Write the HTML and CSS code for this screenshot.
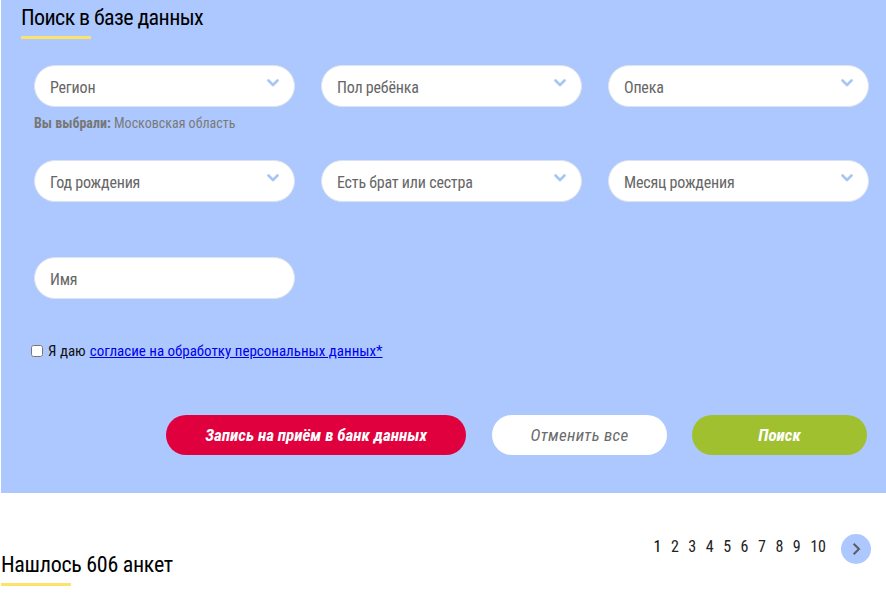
FILE: index.html
```html
<!DOCTYPE html>
<html lang="ru">
<head>
<meta charset="utf-8">
<title>Поиск в базе данных</title>
<link rel="stylesheet" href="styles.css">
</head>
<body>
<div class="page">
  <section class="search">
    <h2 class="heading">Поиск в базе данных</h2>
    <div class="fields">
      <div class="field">
        <div class="select"><span>Регион</span><svg class="chev" viewBox="0 0 12 8"><path d="M1.5 1.5 L6 6 L10.5 1.5"/></svg></div>
        <div class="chosen"><b>Вы выбрали:</b> Московская область</div>
      </div>
      <div class="field">
        <div class="select"><span>Пол ребёнка</span><svg class="chev" viewBox="0 0 12 8"><path d="M1.5 1.5 L6 6 L10.5 1.5"/></svg></div>
      </div>
      <div class="field">
        <div class="select"><span>Опека</span><svg class="chev" viewBox="0 0 12 8"><path d="M1.5 1.5 L6 6 L10.5 1.5"/></svg></div>
      </div>
      <div class="field">
        <div class="select"><span>Год рождения</span><svg class="chev" viewBox="0 0 12 8"><path d="M1.5 1.5 L6 6 L10.5 1.5"/></svg></div>
      </div>
      <div class="field">
        <div class="select"><span>Есть брат или сестра</span><svg class="chev" viewBox="0 0 12 8"><path d="M1.5 1.5 L6 6 L10.5 1.5"/></svg></div>
      </div>
      <div class="field">
        <div class="select"><span>Месяц рождения</span><svg class="chev" viewBox="0 0 12 8"><path d="M1.5 1.5 L6 6 L10.5 1.5"/></svg></div>
      </div>
      <div class="field name-field">
        <div class="select"><span>Имя</span></div>
      </div>
    </div>
    <label class="consent"><input type="checkbox"> Я даю <a href="#">согласие на обработку персональных данных*</a></label>
    <div class="actions">
      <button class="btn btn-red">Запись на приём в банк данных</button>
      <button class="btn btn-white">Отменить все</button>
      <button class="btn btn-green">Поиск</button>
    </div>
  </section>
  <div class="results">
    <h2 class="heading">Нашлось 606 анкет</h2>
    <nav class="pager">
      <a class="current">1</a><a>2</a><a>3</a><a>4</a><a>5</a><a>6</a><a>7</a><a>8</a><a>9</a><a>10</a>
      <span class="next"><svg viewBox="0 0 12 12"><path d="M4 1.5 L8.5 6 L4 10.5"/></svg></span>
    </nav>
  </div>
</div>
</body>
</html>
```
FILE: styles.css
```css
body {
  margin: 0;
  font-family: "Roboto Condensed", Roboto, "Liberation Sans", sans-serif;
  font-stretch: condensed;
  background: #fff;
  color: #111;
}

.page {
  padding-left: 1px;
}

.search {
  background: #adc8fe;
  padding: 5px 19px 38px 20px;
}

.heading {
  margin: 0;
  font-weight: 400;
  font-size: 22px;
  line-height: 26px;
  letter-spacing: -0.6px;
  color: #000;
  display: inline-block;
  position: relative;
  padding-bottom: 8px;
}

.heading::after {
  content: "";
  position: absolute;
  left: 0;
  bottom: 0;
  width: 70px;
  height: 3px;
  background: #fde36a;
}

.fields {
  display: grid;
  grid-template-columns: repeat(3, 261px);
  column-gap: 26px;
  margin: 26px 0 0 13px;
}

.field {
  height: 95px;
}

.select {
  height: 42px;
  box-sizing: border-box;
  border: 1px solid #dde3ee;
  border-radius: 21px;
  background: #fff;
  display: flex;
  align-items: center;
  justify-content: space-between;
  padding: 2px 15px 0 15px;
  font-size: 16px;
  color: #666;
  letter-spacing: -0.2px;
}

.chev {
  width: 12px;
  height: 8px;
  margin-top: -9px;
  fill: none;
  stroke: #a7c5f6;
  stroke-width: 2.6;
  stroke-linecap: round;
  stroke-linejoin: round;
}

.chosen {
  margin-top: 8px;
  font-size: 14px;
  color: #7a7a7a;
}

.chosen b {
  color: #777;
}

.name-field {
  height: 42px;
  margin-top: 2px;
}

.consent {
  display: flex;
  align-items: center;
  gap: 5px;
  margin: 43px 0 0 10px;
  font-size: 15px;
  color: #111;
}

.consent input {
  margin: 0;
  width: 12px;
  height: 12px;
}

.consent a {
  color: #0000ee;
  margin-left: -1px;
}

.actions {
  display: flex;
  justify-content: flex-end;
  gap: 25px;
  margin-top: 55px;
}

.btn {
  height: 40px;
  border-radius: 20px;
  border: none;
  font-family: inherit;
  font-stretch: condensed;
  font-style: italic;
  font-size: 17px;
  font-weight: 700;
  width: 175px;
  padding: 0;
}

.btn-red {
  width: 300px;
  margin-right: 1px;
  background: #e0003e;
  color: #fff;
}

.btn-white {
  background: #fff;
  color: #6b6b6b;
  font-weight: 400;
  letter-spacing: 0.3px;
}

.btn-green {
  background: #a0c030;
  color: #fff;
}

.results {
  display: flex;
  justify-content: space-between;
  align-items: flex-start;
  padding: 41px 15px 0 0;
}

.results .heading {
  font-size: 22px;
  letter-spacing: -0.3px;
  margin-top: 18px;
}

.pager {
  display: flex;
  align-items: center;
  font-size: 16px;
  color: #222;
}

.pager a {
  margin: 0 9.5px 5px 0;
}

.pager a.current {
  color: #000;
}

.next {
  width: 30px;
  height: 30px;
  border-radius: 50%;
  background: #adc8fe;
  display: flex;
  align-items: center;
  justify-content: center;
  margin-left: 5.5px;
}

.next svg {
  width: 14px;
  height: 14px;
  fill: none;
  stroke: #5f5f5f;
  stroke-width: 1.8;
}
```
